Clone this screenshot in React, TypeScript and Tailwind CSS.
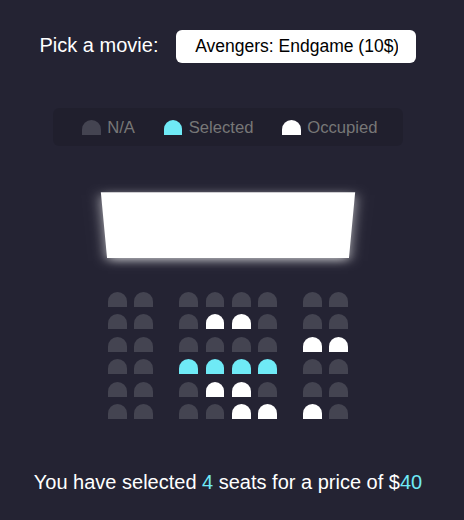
import { useState } from 'react';

type SeatState = 'na' | 'selected' | 'occupied';

const layout: SeatState[][] = [
  ['na', 'na', 'na', 'na', 'na', 'na', 'na', 'na'],
  ['na', 'na', 'na', 'occupied', 'occupied', 'na', 'na', 'na'],
  ['na', 'na', 'na', 'na', 'na', 'na', 'occupied', 'occupied'],
  ['na', 'na', 'selected', 'selected', 'selected', 'selected', 'na', 'na'],
  ['na', 'na', 'na', 'occupied', 'occupied', 'na', 'na', 'na'],
  ['na', 'na', 'na', 'na', 'occupied', 'occupied', 'occupied', 'na'],
];

const seatColor: Record<SeatState, string> = {
  na: 'bg-[#444451]',
  selected: 'bg-[#6feaf6]',
  occupied: 'bg-white',
};

function Seat({ state, className = '' }: { state: SeatState; className?: string }) {
  return (
    <div
      className={`h-[15px] w-[18.75px] my-[3.75px] rounded-t-[12.5px] ${seatColor[state]} ${className}`}
    />
  );
}

export default function App() {
  const [price] = useState(10);
  const selectedCount = layout.flat().filter((s) => s === 'selected').length;

  return (
    <div className="min-h-screen w-full bg-[#242333] text-white font-['Liberation_Sans',Arial,sans-serif]">
      <div className="w-[456px] flex flex-col items-center">
        <div className="mt-[30px] flex items-baseline">
          <label className="text-[20px]">Pick a movie:</label>
          <select
            defaultValue="10"
            className="ml-[18px] w-[240px] h-[33px] appearance-none rounded-[6px] border-0 bg-white px-[18.75px] text-[17.5px] text-black outline-none"
          >
            <option value="10">Avengers: Endgame (10$)</option>
            <option value="12">Joker (12$)</option>
            <option value="8">Toy Story 4 (8$)</option>
            <option value="9">The Lion King (9$)</option>
          </select>
        </div>

        <ul className="mt-[45px] flex h-[38px] items-center gap-[25px] rounded-[6px] bg-[rgba(0,0,0,0.1)] px-[25px] text-[16.67px] text-[#777]">
          <li className="flex items-center">
            <Seat state="na" className="mx-[3.75px]" />
            <small className="ml-[2.5px] text-[16.67px]">N/A</small>
          </li>
          <li className="flex items-center">
            <Seat state="selected" className="mx-[3.75px]" />
            <small className="ml-[2.5px] text-[16.67px]">Selected</small>
          </li>
          <li className="flex items-center">
            <Seat state="occupied" className="mx-[3.75px]" />
            <small className="ml-[2.5px] text-[16.67px]">Occupied</small>
          </li>
        </ul>

        <div className="mt-[17px] mb-[37.5px] w-[247.5px] [perspective:1250px]">
          <div className="my-[18.75px] h-[87.5px] w-full bg-white [transform:rotateX(-45deg)] shadow-[0_3.75px_12.5px_rgba(255,255,255,0.7)]" />
          {layout.map((row, r) => (
            <div key={r} className="flex">
              {row.map((s, c) => (
                <Seat
                  key={c}
                  state={s}
                  className={
                    c === 1
                      ? 'ml-[3.75px] mr-[22.5px]'
                      : c === 6
                        ? 'ml-[22.5px] mr-[3.75px]'
                        : 'mx-[3.75px]'
                  }
                />
              ))}
            </div>
          ))}
        </div>

        <p className="my-[6.25px] text-[20px]">
          You have selected <span className="text-[#6feaf6]">{selectedCount}</span> seats for a
          price of $<span className="text-[#6feaf6]">{selectedCount * price}</span>
        </p>
      </div>
    </div>
  );
}
